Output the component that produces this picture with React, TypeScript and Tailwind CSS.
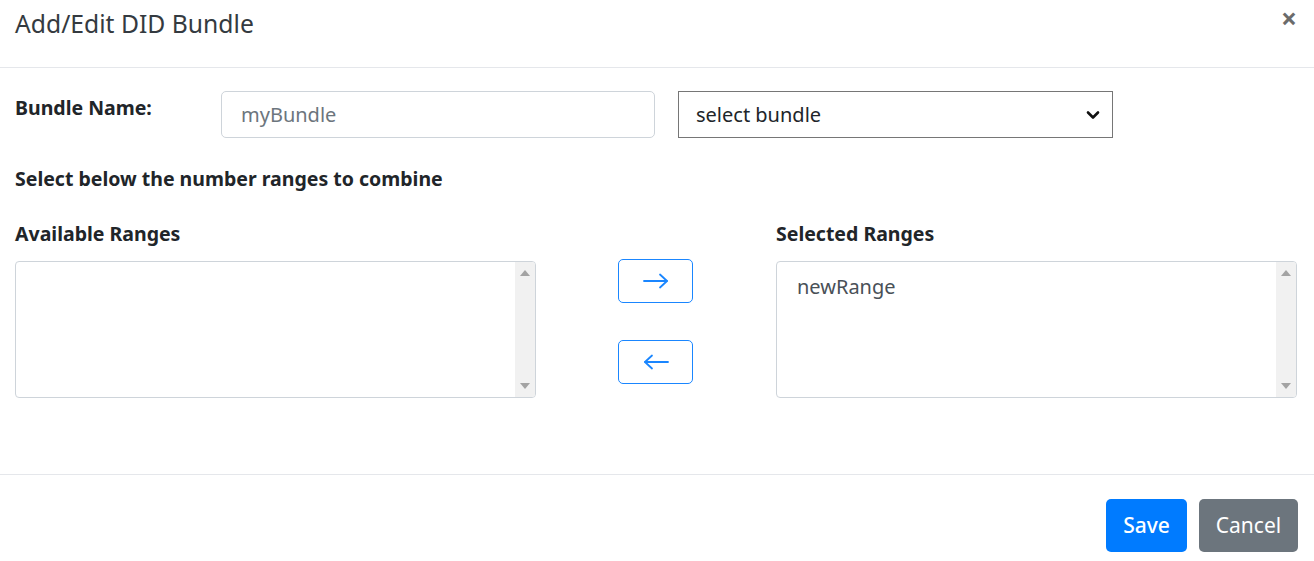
import React from "react";

function FakeList({ items }: { items: string[] }) {
  return (
    <div className="flex h-[137px] w-full rounded-[4px] border border-[#ced4da] bg-white overflow-hidden">
      <div className="flex-1 px-[20px] pt-[12px] text-[20px] leading-[26px] text-[#495057]">
        {items.map((i) => (
          <div key={i}>{i}</div>
        ))}
      </div>
      <div className="flex w-[20px] flex-col items-center justify-between bg-[#f1f1f1] py-[8px]">
        <svg width="10" height="6" viewBox="0 0 10 6"><path d="M5 0 L10 6 L0 6 Z" fill="#a3a3a3" /></svg>
        <svg width="10" height="6" viewBox="0 0 10 6"><path d="M0 0 L10 0 L5 6 Z" fill="#a3a3a3" /></svg>
      </div>
    </div>
  );
}

function ArrowBtn({ dir }: { dir: "right" | "left" }) {
  return (
    <button className="flex h-[44px] w-[75px] items-center justify-center rounded-[5px] border-[1.5px] border-[#1a86ff] bg-white">
      <svg width="26" height="16" viewBox="0 0 26 16" fill="none" stroke="#1a86ff" strokeWidth="1.8" strokeLinecap="round" strokeLinejoin="round">
        {dir === "right" ? (
          <>
            <path d="M1 8 H24" />
            <path d="M17 1.5 L24 8 L17 14.5" />
          </>
        ) : (
          <>
            <path d="M2 8 H25" />
            <path d="M9 1.5 L2 8 L9 14.5" />
          </>
        )}
      </svg>
    </button>
  );
}

export default function App() {
  return (
    <div className="h-[561px] w-[1314px] bg-white text-[#212529]" style={{ fontFamily: '"Noto Sans", "Open Sans", sans-serif' }}>
      {/* header */}
      <div className="flex h-[68px] items-start justify-between border-b border-[#e5e7eb] pl-[15px] pr-[17px]">
        <h1 className="pt-[5px] text-[24.7px] leading-[38px] text-[#343a40]">Add/Edit DID Bundle</h1>
        <button className="pt-[2px] text-[28px] font-bold leading-[32px] text-[#6b6b6b]">×</button>
      </div>

      {/* body */}
      <div className="h-[407px] border-b border-[#e5e7eb] px-[15px] pt-[23px]">
        <div className="flex items-start">
          <div className="w-[206px] pt-[3px] text-[19.5px] font-bold leading-[28px]">Bundle Name:</div>
          <div className="flex h-[47px] w-[434px] items-center rounded-[5px] border border-[#ced4da] px-[19px] text-[20px] text-[#6c757d]">
            myBundle
          </div>
          <div className="ml-[23px] flex h-[47px] w-[435px] items-center justify-between border border-[#767676] px-[17px] pr-[12px] text-[20px] text-[#212529]">
            <span>select bundle</span>
            <svg width="14" height="10" viewBox="0 0 14 10" fill="none" stroke="#111" strokeWidth="2.6" strokeLinecap="round" strokeLinejoin="round">
              <path d="M2 2.5 L7 7.5 L12 2.5" />
            </svg>
          </div>
        </div>

        <div className="mt-[27px] text-[19.5px] font-bold leading-[28px]">Select below the number ranges to combine</div>

        <div className="mt-[27px] flex items-start">
          <div className="w-[521px]">
            <div className="text-[19.5px] font-bold leading-[28px]">Available Ranges</div>
            <div className="mt-[13px]">
              <FakeList items={[]} />
            </div>
          </div>
          <div className="ml-[82px] flex flex-col gap-[37px] pt-[39px]">
            <ArrowBtn dir="right" />
            <ArrowBtn dir="left" />
          </div>
          <div className="ml-[83px] w-[521px]">
            <div className="text-[19.5px] font-bold leading-[28px]">Selected Ranges</div>
            <div className="mt-[13px]">
              <FakeList items={["newRange"]} />
            </div>
          </div>
        </div>
      </div>

      {/* footer */}
      <div className="flex justify-end gap-[12px] pr-[16px] pt-[24px]">
        <button className="h-[53px] w-[81px] rounded-[5px] bg-[#007bff] text-[21px] font-medium text-white">Save</button>
        <button className="h-[53px] w-[99px] rounded-[5px] bg-[#6c757d] text-[21px] text-white">Cancel</button>
      </div>
    </div>
  );
}
